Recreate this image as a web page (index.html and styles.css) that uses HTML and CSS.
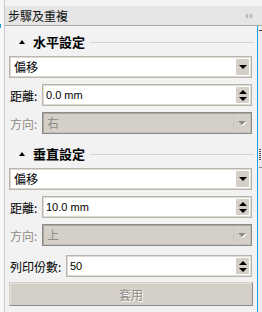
FILE: index.html
```html
<!DOCTYPE html>
<html lang="zh-Hant">
<head>
  <meta charset="UTF-8" />
  <title>步驟及重複</title>
  <link rel="stylesheet" href="styles.css">
</head>
<body>
  <div class="frame">
    <div class="gutter"><div class="gutter-mark"></div></div>

    <div class="dock">
      <div class="titlebar">
        <span class="title">步驟及重複</span>
        <svg class="collapse" width="8" height="6" viewBox="0 0 8 6">
          <path d="M0 0 L3 3 L0 6 Z M4 0 L7 3 L4 6 Z" fill="#b4b4b4" />
        </svg>
      </div>

      <div class="dock-body">
        <div class="panel">
          <!-- 水平 -->
          <div class="section section-first">
            <span class="caret"></span>
            <span class="section-name">水平設定</span>
            <span class="section-line"></span>
          </div>

          <div class="combo">
            <span class="combo-text">偏移</span>
            <span class="combo-btn"><span class="arrow-down"></span></span>
          </div>

          <div class="row">
            <label class="lbl">距離:</label>
            <div class="spin">
              <span class="spin-text">0.0 mm</span>
              <span class="spin-btn"><span class="arrow-up"></span><span class="arrow-down"></span></span>
            </div>
          </div>

          <div class="row">
            <label class="lbl lbl-off">方向:</label>
            <div class="combo combo-off">
              <span class="combo-text">右</span>
              <span class="combo-btn"><span class="arrow-off"></span></span>
            </div>
          </div>

          <!-- 垂直 -->
          <div class="section">
            <span class="caret"></span>
            <span class="section-name">垂直設定</span>
            <span class="section-line"></span>
          </div>

          <div class="combo">
            <span class="combo-text">偏移</span>
            <span class="combo-btn"><span class="arrow-down"></span></span>
          </div>

          <div class="row">
            <label class="lbl">距離:</label>
            <div class="spin">
              <span class="spin-text">10.0 mm</span>
              <span class="spin-btn"><span class="arrow-up"></span><span class="arrow-down"></span></span>
            </div>
          </div>

          <div class="row">
            <label class="lbl lbl-off">方向:</label>
            <div class="combo combo-off">
              <span class="combo-text">上</span>
              <span class="combo-btn"><span class="arrow-off"></span></span>
            </div>
          </div>

          <div class="row row-copies">
            <label class="lbl lbl-wide">列印份數:</label>
            <div class="spin">
              <span class="spin-text">50</span>
              <span class="spin-btn"><span class="arrow-up"></span><span class="arrow-down"></span></span>
            </div>
          </div>

          <button class="apply" disabled>套用</button>
        </div>

        <div class="edge">
          <span class="edge-mark edge-mark-a"></span>
          <span class="edge-dots"></span>
          <span class="edge-mark edge-mark-b"></span>
        </div>
      </div>
    </div>
  </div>
</body>
</html>
```

FILE: styles.css
```css
html, body {
  margin: 0;
  padding: 0;
  height: 100%;
}
body {
  background: #f4f4f4;
  font-family: "Noto Sans CJK TC", "Liberation Sans", sans-serif;
  font-size: 12px;
  color: #000;
  overflow: hidden;
}

.frame {
  display: flex;
  height: 312px;
}

.gutter {
  width: 4px;
  border-right: 1px solid #c9c9c9;
  background: #f7f7f7;
}
.gutter-mark {
  width: 1px;
  height: 4px;
  margin-top: 24px;
  background: #1ba1e2;
}

.dock {
  flex: 1;
  display: flex;
  flex-direction: column;
  padding-top: 6px;
}

.titlebar {
  height: 19px;
  border-bottom: 1px solid #a9a9a9;
  background: #e5e5e5;
  display: flex;
  align-items: center;
  justify-content: space-between;
  padding: 0 8px 0 3px;
}
.title {
  font-size: 12px;
  line-height: 19px;
  color: #111;
}
.collapse {
  margin-top: 1px;
}

.dock-body {
  flex: 1;
  display: flex;
}

.panel {
  flex: 1;
  background: #f2f2f2;
  padding: 0 5px 0 4px;
  display: flex;
  flex-direction: column;
}

.edge {
  width: 4px;
  border-left: 1px solid #1ba1e2;
  background: #ececec;
  display: flex;
  flex-direction: column;
  align-items: center;
}
.edge-mark {
  width: 3px;
  height: 1px;
  background: #444;
}
.edge-mark-a {
  margin-top: 4px;
}
.edge-mark-b {
  margin-top: 6px;
  background: #888;
}
.edge-dots {
  width: 2px;
  height: 12px;
  margin-top: 118px;
  background: repeating-linear-gradient(#555 0 1px, transparent 1px 2px);
}

/* section headers */
.section {
  display: flex;
  align-items: center;
  height: 14px;
  margin: 13px -2px 7px 10px;
}
.section-first {
  margin-top: 9px;
}
.caret {
  width: 0;
  height: 0;
  border-left: 3px solid transparent;
  border-right: 3px solid transparent;
  border-bottom: 4px solid #000;
  margin-right: 8px;
}
.section-name {
  font-weight: bold;
  font-size: 13px;
  line-height: 14px;
}
.section-line {
  flex: 1;
  height: 1px;
  margin-left: 5px;
  background: #d2d2d2;
}

/* combo box */
.combo {
  box-sizing: border-box;
  height: 22px;
  background: #fff;
  border: 1px solid #b9b5ad;
  box-shadow: inset 0 0 0 1px #dedbd4;
  display: flex;
  align-items: center;
  padding: 0 2px 0 4px;
}
.combo-text {
  flex: 1;
  line-height: 18px;
}
.combo-btn {
  width: 13px;
  height: 16px;
  background: #d4d0c8;
  display: flex;
  align-items: center;
  justify-content: center;
}
.arrow-down {
  width: 0;
  height: 0;
  border-left: 4px solid transparent;
  border-right: 4px solid transparent;
  border-top: 4px solid #000;
}
.arrow-up {
  width: 0;
  height: 0;
  border-left: 4px solid transparent;
  border-right: 4px solid transparent;
  border-bottom: 4px solid #000;
}

.combo-off {
  flex: 1;
  background: #d4d0c8;
  border: 1px solid #8c8c8c;
  box-shadow: inset 1px 1px 0 #a9a59e, inset -1px -1px 0 #c4c0b8;
  color: #8f8c86;
}
.combo-off .combo-btn {
  width: 15px;
  border-left: 1px solid #c8c4bc;
}
.arrow-off {
  width: 0;
  height: 0;
  border-left: 4px solid transparent;
  border-right: 4px solid transparent;
  border-top: 4px solid #8f8c86;
  filter: drop-shadow(1px 1px 0 #fff);
}

/* rows */
.row {
  display: flex;
  align-items: center;
  margin-top: 6px;
}
.lbl {
  width: 33px;
  padding-left: 1px;
  box-sizing: border-box;
}
.lbl-off {
  color: #8f8c86;
}
.lbl-wide {
  width: 57px;
}
.row-copies {
  margin-top: 9px;
}

.spin {
  flex: 1;
  box-sizing: border-box;
  height: 22px;
  background: #fff;
  border: 1px solid #b9b5ad;
  box-shadow: inset 0 0 0 1px #dedbd4;
  display: flex;
  align-items: center;
  padding: 0 2px 0 3px;
}
.spin-text {
  flex: 1;
  font-family: "Liberation Sans", sans-serif;
  font-size: 11px;
}
.spin-btn {
  width: 13px;
  height: 16px;
  background: #d4d0c8;
  display: flex;
  flex-direction: column;
  align-items: center;
  justify-content: center;
  gap: 3px;
}

.apply {
  margin-top: 5px;
  margin-right: -1px;
  height: 24px;
  background: #d4d0c8;
  border: 1px solid #d4d0c8;
  border-right-color: #8a8a8a;
  border-bottom-color: #8a8a8a;
  box-shadow: inset 1px 1px 0 #e4e1da;
  font-family: "Noto Sans CJK TC", sans-serif;
  font-size: 12px;
  color: #8f8c86;
  text-shadow: 1px 1px 0 #fff;
  padding: 0;
}
```
